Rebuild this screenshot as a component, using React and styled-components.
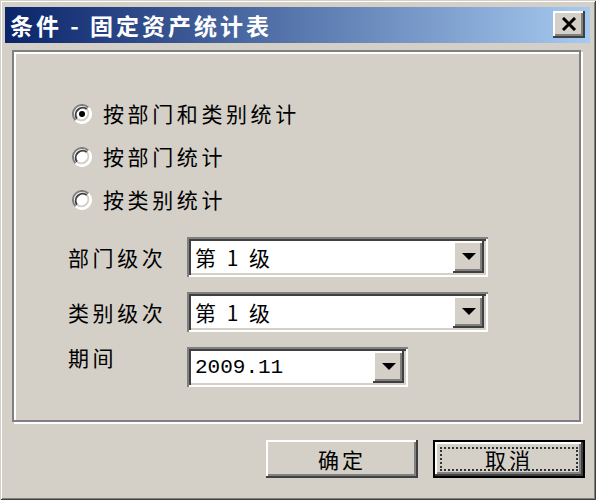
import React from 'react';
import styled, { createGlobalStyle } from 'styled-components';

const Global = createGlobalStyle`
  html, body { margin: 0; background: #d4d0c8; }
`;

const raised = `
  background: #d4d0c8;
  box-shadow: inset -2px -2px #404040, inset 2px 2px #fff, inset -4px -4px #808080;
`;

const Dialog = styled.div`
  width: 596px;
  height: 500px;
  box-sizing: border-box;
  padding: 7px 6px 0 5px;
  background: #d4d0c8;
  box-shadow: inset 1px 1px #d4d0c8, inset -1px -1px #404040, inset 2px 2px #fff, inset -2px -2px #808080;
  display: flex;
  flex-direction: column;
  font-family: "Noto Sans CJK SC", "Liberation Sans", sans-serif;
  color: #000;
`;

const TitleBar = styled.div`
  height: 36px;
  display: flex;
  align-items: center;
  justify-content: space-between;
  padding: 0 5px;
  background: linear-gradient(to right, #0a246a, #a6caf0);
`;

const Title = styled.div`
  color: #fff;
  font-size: 23px;
  font-weight: 700;
  letter-spacing: 3px;
  line-height: 1;
  white-space: pre;
`;

const CloseButton = styled.div`
  ${raised}
  width: 32px;
  height: 27px;
  display: flex;
  align-items: center;
  justify-content: center;
  margin-bottom: 2px;
`;

const Group = styled.div`
  height: 372px;
  box-sizing: border-box;
  margin: 7px 9px 0 7px;
  border: 2px solid #808080;
  box-shadow: inset 2px 2px #fff, 2px 2px #fff;
  padding: 40px 0 0 54px;
`;

const RadioList = styled.div`
  display: flex;
  flex-direction: column;
`;

const RadioRow = styled.div`
  height: 43px;
  display: flex;
  align-items: center;
  gap: 11px;
  padding-left: 4px;
`;

const Text = styled.span`
  font-size: 21px;
  letter-spacing: 3.6px;
  line-height: 21px;
  white-space: pre;
`;

const Form = styled.div`
  margin-top: 16px;
  display: grid;
  grid-template-columns: 119px auto;
  grid-auto-rows: 40px;
  row-gap: 15px;
`;

const Label = styled(Text)`
  align-self: ${p => (p.$top ? 'start' : 'center')};
`;

const Combo = styled.div`
  width: ${p => p.$w}px;
  height: 40px;
  box-sizing: border-box;
  padding: 4px;
  display: flex;
  align-items: stretch;
  background: #fff;
  box-shadow: inset 2px 2px #808080, inset -2px -2px #fff, inset 4px 4px #404040, inset -4px -4px #d4d0c8;
`;

const ComboValue = styled.div`
  flex: 1;
  display: flex;
  align-items: center;
  padding-left: 4px;
  font-size: 21px;
  letter-spacing: ${p => (p.$mono ? '0' : '3px')};
  font-family: ${p => (p.$mono ? '"Liberation Mono", monospace' : 'inherit')};
  white-space: pre;
`;

const DropButton = styled.div`
  ${raised}
  width: 31px;
  display: flex;
  align-items: center;
  justify-content: center;
`;

const Buttons = styled.div`
  display: flex;
  justify-content: flex-end;
  gap: 15px;
  margin: 18px 5px 0 0;
`;

const Button = styled.div`
  position: relative;
  width: 152px;
  height: 38px;
  box-sizing: border-box;
  display: flex;
  align-items: center;
  justify-content: center;
  font-size: 21px;
  letter-spacing: 3px;
  ${raised}
  ${p => p.$default && `
    border: 2px solid #000;
    &::after {
      content: '';
      position: absolute;
      inset: 5px;
      border: 2px dotted #333;
    }
  `}
`;

const Arrow = () => (
  <svg width="14" height="8" viewBox="0 0 14 8">
    <polygon points="0,0 14,0 7,7" fill="#000" />
  </svg>
);

const CloseIcon = () => (
  <svg width="16" height="14" viewBox="0 0 16 14">
    <path d="M2 1 L14 13 M14 1 L2 13" stroke="#000" strokeWidth="3" />
  </svg>
);

const Radio = ({ checked }) => (
  <svg width="20" height="20" viewBox="0 0 20 20">
    <circle cx="10" cy="10" r="9" fill="#fff" />
    <path d="M3.6 16.4 A9 9 0 0 1 16.4 3.6" fill="none" stroke="#808080" strokeWidth="2" />
    <path d="M16.4 3.6 A9 9 0 0 1 3.6 16.4" fill="none" stroke="#fff" strokeWidth="2" />
    <path d="M5.1 14.9 A7 7 0 0 1 14.9 5.1" fill="none" stroke="#404040" strokeWidth="2" />
    <path d="M14.9 5.1 A7 7 0 0 1 5.1 14.9" fill="none" stroke="#d4d0c8" strokeWidth="2" />
    {checked && <circle cx="10" cy="10" r="3" fill="#000" />}
  </svg>
);

const options = ['按部门和类别统计', '按部门统计', '按类别统计'];

export default function App() {
  return (
    <>
      <Global />
      <Dialog>
        <TitleBar>
          <Title>条件 - 固定资产统计表</Title>
          <CloseButton><CloseIcon /></CloseButton>
        </TitleBar>
        <Group>
          <RadioList>
            {options.map((o, i) => (
              <RadioRow key={o}>
                <Radio checked={i === 0} />
                <Text>{o}</Text>
              </RadioRow>
            ))}
          </RadioList>
          <Form>
            <Label>部门级次</Label>
            <Combo $w={301}>
              <ComboValue>第 1 级</ComboValue>
              <DropButton><Arrow /></DropButton>
            </Combo>
            <Label>类别级次</Label>
            <Combo $w={301}>
              <ComboValue>第 1 级</ComboValue>
              <DropButton><Arrow /></DropButton>
            </Combo>
            <Label $top>期间</Label>
            <Combo $w={221}>
              <ComboValue $mono>2009.11</ComboValue>
              <DropButton><Arrow /></DropButton>
            </Combo>
          </Form>
        </Group>
        <Buttons>
          <Button>确定</Button>
          <Button $default>取消</Button>
        </Buttons>
      </Dialog>
    </>
  );
}
